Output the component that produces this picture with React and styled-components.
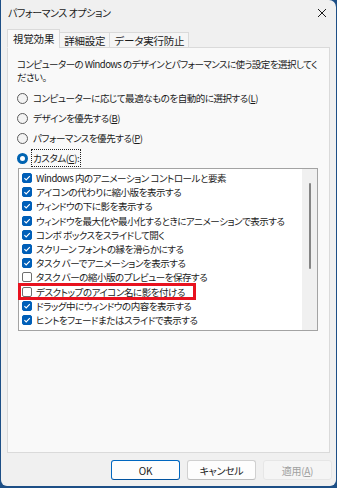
import React from "react";
import styled, { createGlobalStyle } from "styled-components";

const GlobalStyle = createGlobalStyle`
  html, body {
    margin: 0;
    padding: 0;
    background: #1d4f86;
  }
  body {
    font-family: "Noto Sans CJK JP", "Noto Sans", sans-serif;
    font-size: 9.5px;
    letter-spacing: -0.45px;
    font-feature-settings: "palt";
    color: #1a1a1a;
  }
`;

const options = [
  { label: "Windows 内のアニメーション コントロールと要素", checked: true },
  { label: "アイコンの代わりに縮小版を表示する", checked: true },
  { label: "ウィンドウの下に影を表示する", checked: true },
  { label: "ウィンドウを最大化や最小化するときにアニメーションで表示する", checked: true },
  { label: "コンボ ボックスをスライドして開く", checked: true },
  { label: "スクリーン フォントの縁を滑らかにする", checked: true },
  { label: "タスク バーでアニメーションを表示する", checked: true },
  { label: "タスク バーの縮小版のプレビューを保存する", checked: false },
  { label: "デスクトップのアイコン名に影を付ける", checked: false, marked: true },
  { label: "ドラッグ中にウィンドウの内容を表示する", checked: true },
  { label: "ヒントをフェードまたはスライドで表示する", checked: true },
];

const radios = [
  { label: "コンピューターに応じて最適なものを自動的に選択する", key: "L" },
  { label: "デザインを優先する", key: "B" },
  { label: "パフォーマンスを優先する", key: "P" },
  { label: "カスタム", key: "C", selected: true, colon: true },
];

const Window = styled.div`
  width: 335px;
  height: 486px;
  margin-left: 1px;
  background: #f0f0f0;
  border-radius: 0 7px 6px 6px;
  display: flex;
  flex-direction: column;
  overflow: hidden;
`;

const TitleBar = styled.div`
  height: 25px;
  display: flex;
  align-items: center;
  justify-content: space-between;
  padding: 0 9px 0 7px;
`;

const Title = styled.span`
  font-size: 10px;
`;

const TabRow = styled.div`
  display: flex;
  align-items: flex-end;
  padding-left: 6px;
  height: 23px;
  margin-bottom: -1px;
  position: relative;
  z-index: 1;
`;

const Tab = styled.div`
  height: ${(p) => (p.$active ? "19px" : "16px")};
  padding: 0 ${(p) => (p.$active ? "5px" : "4px")};
  margin-left: ${(p) => (p.$active ? "0" : "-1px")};
  display: flex;
  align-items: center;
  background: ${(p) => (p.$active ? "#f9f9f9" : "#f5f5f5")};
  border: 1px solid #dadada;
  border-bottom: ${(p) => (p.$active ? "1px solid #f9f9f9" : "1px solid #dadada")};
  font-size: 10.5px;
  letter-spacing: -0.2px;
  box-sizing: border-box;
`;

const Panel = styled.div`
  margin: 0 6px 0 6px;
  height: 406px;
  box-sizing: border-box;
  background: #f9f9f9;
  border: 1px solid #dadada;
  padding: 10px 10px 0 9px;
`;

const Description = styled.p`
  margin: 0 0 4px;
  line-height: 13px;
  letter-spacing: -0.55px;
`;

const RadioRow = styled.div`
  height: 20px;
  display: flex;
  align-items: center;
  gap: 4px;
`;

const RadioCircle = styled.span`
  width: 11px;
  height: 11px;
  box-sizing: border-box;
  border-radius: 50%;
  border: ${(p) => (p.$on ? "3px solid #0063b1" : "1px solid #5c5c5c")};
  background: ${(p) => (p.$on ? "#ffffff" : "#f3f3f3")};
  flex: none;
`;

const RadioLabel = styled.span`
  padding: 1px 1px;
  border: 1px ${(p) => (p.$focus ? "dotted #222" : "solid transparent")};
  margin-left: -1px;
`;

const Key = styled.span`
  text-decoration: underline;
  text-underline-offset: 1px;
`;

const ListBox = styled.div`
  margin-left: 1px;
  width: 300px;
  height: 163px;
  box-sizing: border-box;
  border: 1px solid #a3a3a3;
  background: #ffffff;
  display: flex;
`;

const Items = styled.div`
  flex: 1;
  padding: 2px 0 0 3px;
`;

const Item = styled.div`
  height: 14.2px;
  display: flex;
  align-items: center;
  gap: 4px;
  position: relative;
  white-space: nowrap;
`;

const Marker = styled.span`
  position: absolute;
  left: -4px;
  top: -1.5px;
  width: 178px;
  height: 17px;
  box-sizing: border-box;
  border: 3px solid #e8121f;
`;

const Box = styled.span`
  width: 10px;
  height: 10px;
  box-sizing: border-box;
  border-radius: 2px;
  flex: none;
  background: ${(p) => (p.$on ? "#005fb8" : "#ffffff")};
  border: 1px solid ${(p) => (p.$on ? "#005fb8" : "#6e6e6e")};
  display: flex;
  align-items: center;
  justify-content: center;
`;

const ScrollTrack = styled.div`
  width: 15px;
  background: #f0f0f0;
  display: flex;
  justify-content: center;
  padding-top: 14px;
  box-sizing: border-box;
`;

const ScrollThumb = styled.div`
  width: 2px;
  height: 86px;
  border-radius: 1px;
  background: #858585;
`;

const Footer = styled.div`
  flex: 1;
  display: flex;
  justify-content: flex-end;
  align-items: flex-start;
  gap: 7px;
  padding: 7px 4px 0 0;
`;

const Button = styled.button`
  width: 69px;
  height: 20px;
  box-sizing: border-box;
  border-radius: 3px;
  font: inherit;
  font-size: 10px;
  letter-spacing: -0.3px;
  padding: 0;
  background: ${(p) => (p.$disabled ? "#f5f5f5" : "#fdfdfd")};
  color: ${(p) => (p.$disabled ? "#a0a0a0" : "#1a1a1a")};
  border: 1px solid ${(p) => (p.$primary ? "#0067c0" : p.$disabled ? "#e6e6e6" : "#d0d0d0")};
  border-bottom-color: ${(p) => (p.$primary ? "#0053a0" : p.$disabled ? "#e6e6e6" : "#bdbdbd")};
`;

const Check = () => (
  <svg width="8" height="8" viewBox="0 0 8 8">
    <path d="M1.4 4.2 L3.2 6 L6.8 2.2" fill="none" stroke="#fff" strokeWidth="1.1" />
  </svg>
);

const CloseIcon = () => (
  <svg width="10" height="10" viewBox="0 0 10 10">
    <path d="M1 1 L9 9 M9 1 L1 9" stroke="#1a1a1a" strokeWidth="1" />
  </svg>
);

export default function App() {
  return (
    <>
      <GlobalStyle />
      <Window>
        <TitleBar>
          <Title>パフォーマンス オプション</Title>
          <CloseIcon />
        </TitleBar>
        <TabRow>
          <Tab $active>視覚効果</Tab>
          <Tab>詳細設定</Tab>
          <Tab>データ実行防止</Tab>
        </TabRow>
        <Panel>
          <Description>
            コンピューターの Windows のデザインとパフォーマンスに使う設定を選択してください。
          </Description>
          {radios.map((r) => (
            <RadioRow key={r.key}>
              <RadioCircle $on={r.selected} />
              <RadioLabel $focus={r.selected}>
                {r.label}(<Key>{r.key}</Key>){r.colon ? ":" : ""}
              </RadioLabel>
            </RadioRow>
          ))}
          <ListBox>
            <Items>
              {options.map((o) => (
                <Item key={o.label}>
                  {o.marked && <Marker />}
                  <Box $on={o.checked}>{o.checked && <Check />}</Box>
                  {o.label}
                </Item>
              ))}
            </Items>
            <ScrollTrack>
              <ScrollThumb />
            </ScrollTrack>
          </ListBox>
        </Panel>
        <Footer>
          <Button $primary>OK</Button>
          <Button>キャンセル</Button>
          <Button $disabled>
            適用(<Key>A</Key>)
          </Button>
        </Footer>
      </Window>
    </>
  );
}
